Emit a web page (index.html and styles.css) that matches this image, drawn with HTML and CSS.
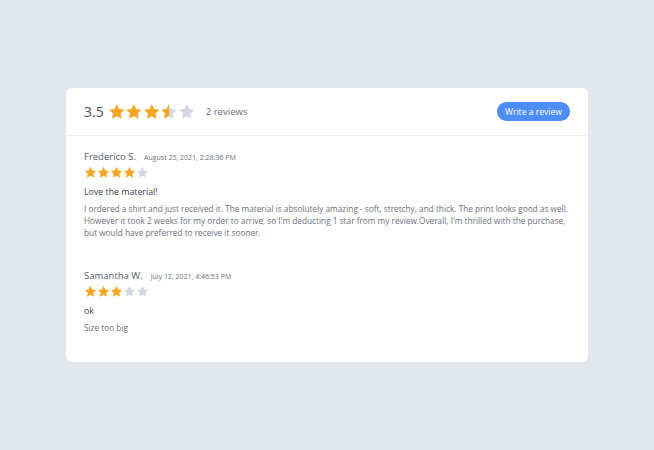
FILE: index.html
```html
<!DOCTYPE html>
<html>
<head>
<meta charset="utf-8">
<link rel="stylesheet" href="styles.css">
</head>
<body>
<svg width="0" height="0" class="defs">
  <defs>
    <symbol id="star" viewBox="0 0 24 24">
      <path d="M12 1.6l3.2 6.6 7.2 1-5.2 5.1 1.3 7.2L12 18.1l-6.5 3.4 1.3-7.2L1.6 9.2l7.2-1z" stroke-linejoin="round"/>
    </symbol>
    <linearGradient id="half" x1="0" x2="1" y1="0" y2="0">
      <stop offset="50%" stop-color="#f5a623"/>
      <stop offset="50%" stop-color="#d3d9e2"/>
    </linearGradient>
  </defs>
</svg>
<div class="card">
  <div class="head">
    <div class="summary">
      <span class="avg">3.5</span>
      <span class="stars big">
        <svg class="on"><use href="#star"/></svg>
        <svg class="on"><use href="#star"/></svg>
        <svg class="on"><use href="#star"/></svg>
        <svg class="halfstar"><use href="#star"/></svg>
        <svg class="off"><use href="#star"/></svg>
      </span>
      <span class="count">2 reviews</span>
    </div>
    <button class="btn">Write a review</button>
  </div>
  <div class="reviews">
    <div class="review">
      <div class="meta"><span class="name">Frederico S.</span><span class="date">August 25, 2021, 2:28:36 PM</span></div>
      <div class="stars small">
        <svg class="on"><use href="#star"/></svg>
        <svg class="on"><use href="#star"/></svg>
        <svg class="on"><use href="#star"/></svg>
        <svg class="on"><use href="#star"/></svg>
        <svg class="off"><use href="#star"/></svg>
      </div>
      <div class="title">Love the material!</div>
      <p class="body">I ordered a shirt and just received it. The material is absolutely amazing - soft, stretchy, and thick. The print looks good as well. However it took 2 weeks for my order to arrive, so I'm deducting 1 star from my review.Overall, I'm thrilled with the purchase, but would have preferred to receive it sooner.</p>
    </div>
    <div class="review">
      <div class="meta"><span class="name">Samantha W.</span><span class="date">July 12, 2021, 4:46:53 PM</span></div>
      <div class="stars small">
        <svg class="on"><use href="#star"/></svg>
        <svg class="on"><use href="#star"/></svg>
        <svg class="on"><use href="#star"/></svg>
        <svg class="off"><use href="#star"/></svg>
        <svg class="off"><use href="#star"/></svg>
      </div>
      <div class="title">ok</div>
      <p class="body">Size too big</p>
    </div>
  </div>
</div>
</body>
</html>
```
FILE: styles.css
```css
html, body { margin: 0; padding: 0; }
body {
  background: #e2e7ec;
  font-family: "Open Sans", "Noto Sans", sans-serif;
  color: #555b66;
  width: 654px;
  height: 450px;
  padding-top: 88px;
  box-sizing: border-box;
}
.defs { position: absolute; }
.card {
  width: 522px;
  margin-left: 66px;
  background: #fff;
  border-radius: 6px;
  box-sizing: border-box;
  height: 274px;
}
.head {
  display: flex;
  align-items: center;
  justify-content: space-between;
  height: 47px;
  padding: 0 18px;
  border-bottom: 1px solid #eceff3;
}
.summary { display: flex; align-items: center; }
.avg { font-size: 14px; color: #4a505a; margin-right: 4px; }
.stars { display: flex; }
.stars svg { fill: #f5a623; }
.stars svg.off { fill: #d3d9e2; }
.stars svg.halfstar { fill: url(#half); }
.big svg { width: 17.6px; height: 17.6px; }
.count { font-size: 9.6px; color: #6b717b; margin-left: 10px; }
.btn {
  font-family: inherit;
  font-size: 8.6px;
  color: #fff;
  background: #4d8cf5;
  border: 0;
  border-radius: 10px;
  height: 19px;
  padding: 0 8px;
}
.reviews { padding: 14px 8px 0 18px; }
.review { margin-bottom: 30px; }
.meta { display: flex; align-items: baseline; }
.name { font-size: 9.5px; color: #555b66; }
.date { font-size: 7px; color: #6b717b; margin-left: 8px; }
.small { margin-top: 3px; }
.small svg { width: 13px; height: 13px; }
.title { font-size: 8.8px; color: #3d424a; margin-top: 7px; }
.body { font-size: 8.27px; line-height: 12px; color: #6b717b; margin: 5px 0 0; }
```
